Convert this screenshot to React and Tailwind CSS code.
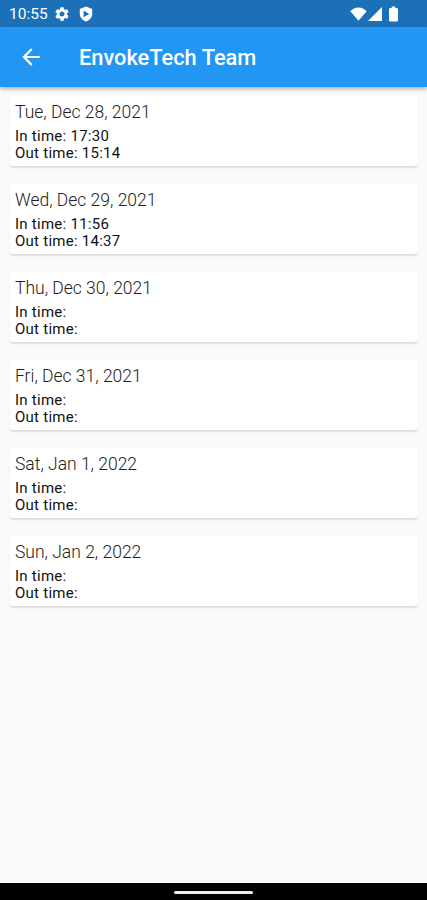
import React from 'react';

const days = [
  { date: 'Tue, Dec 28, 2021', inTime: '17:30', outTime: '15:14' },
  { date: 'Wed, Dec 29, 2021', inTime: '11:56', outTime: '14:37' },
  { date: 'Thu, Dec 30, 2021', inTime: '', outTime: '' },
  { date: 'Fri, Dec 31, 2021', inTime: '', outTime: '' },
  { date: 'Sat, Jan 1, 2022', inTime: '', outTime: '' },
  { date: 'Sun, Jan 2, 2022', inTime: '', outTime: '' },
];

function StatusBar() {
  return (
    <div className="flex h-[27px] shrink-0 items-center bg-[#1b70b7] pl-[9px] pr-[29px] text-white">
      <span className="w-[46px] whitespace-nowrap pt-[3px] text-[15.5px] leading-none">10:55</span>
      <svg viewBox="2 2 20 20" className="w-[14px] h-[14px] fill-current">
        <path d="M19.14 12.94c.04-.3.06-.61.06-.94 0-.32-.02-.64-.07-.94l2.03-1.58a.49.49 0 0 0 .12-.61l-1.92-3.32a.49.49 0 0 0-.59-.22l-2.39.96c-.5-.38-1.03-.7-1.62-.94l-.36-2.54a.48.48 0 0 0-.48-.41h-3.84a.47.47 0 0 0-.47.41l-.36 2.54c-.59.24-1.13.57-1.62.94l-2.39-.96a.48.48 0 0 0-.59.22L2.74 8.87a.47.47 0 0 0 .12.61l2.03 1.58c-.05.3-.09.63-.09.94s.02.64.07.94l-2.03 1.58a.49.49 0 0 0-.12.61l1.92 3.32c.12.22.37.29.59.22l2.39-.96c.5.38 1.03.7 1.62.94l.36 2.54c.05.24.24.41.48.41h3.84c.24 0 .44-.17.47-.41l.36-2.54c.59-.24 1.13-.56 1.62-.94l2.39.96c.22.08.47 0 .59-.22l1.92-3.32a.47.47 0 0 0-.12-.61l-2.01-1.58zM12 15.6A3.61 3.61 0 0 1 8.4 12c0-1.98 1.62-3.6 3.6-3.6s3.6 1.62 3.6 3.6-1.62 3.6-3.6 3.6z" />
      </svg>
      <svg viewBox="0 0 14 16" className="ml-[10px] w-[14px] h-[16px]">
        <path d="M7 .5 13.2 3v5c0 3.5-2.6 6-6.2 7.5C3.4 14 .8 11.5.8 8V3z" fill="currentColor" />
        <path d="M4.6 4.6 10.2 7.9 4.6 11.2z" className="fill-[#1b70b7]" />
      </svg>
      <div className="ml-auto flex items-center">
        <svg viewBox="0 0 17 14" className="w-[17px] h-[14px] fill-current">
          <path d="M8.5 13.8.3 4.3C2.5 1.8 5.3.5 8.5.5s6 1.3 8.2 3.8z" />
        </svg>
        <svg viewBox="0 0 14 14" className="ml-[1px] w-[14px] h-[14px] fill-current">
          <path d="M0 14 14 0v14z" />
        </svg>
        <svg viewBox="0 0 10 16" className="ml-[7px] w-[9px] h-[16px] fill-current" preserveAspectRatio="none">
          <path d="M3 .5h4V2h1.3C9.3 2 10 2.7 10 3.6v10.3c0 1-.7 1.6-1.7 1.6H1.7C.7 15.5 0 14.9 0 13.9V3.6C0 2.7.7 2 1.7 2H3z" />
        </svg>
      </div>
    </div>
  );
}

function AppBar() {
  return (
    <header className="relative z-10 flex h-[60px] shrink-0 items-center bg-[#2196f3] pl-[18px] text-white shadow-[0_2px_4px_rgba(0,0,0,0.3)]">
      <svg viewBox="0 0 24 24" className="w-[26px] h-[26px] fill-current">
        <path d="M20 11H7.83l5.59-5.59L12 4l-8 8 8 8 1.41-1.41L7.83 13H20z" />
      </svg>
      <h1 className="ml-[35px] pt-[2px] text-[21.8px] font-medium leading-none">EnvokeTech Team</h1>
    </header>
  );
}

function DayCard({ date, inTime, outTime }) {
  return (
    <li className="h-[70px] rounded-[3px] bg-white pl-[5px] pt-[5px] shadow-[0_1.5px_1.5px_rgba(0,0,0,0.11)]">
      <h2 className="text-[17.5px] font-light leading-[22px] text-[#222]">{date}</h2>
      <div className="mt-[5px] text-[15px] leading-[17px] tracking-[0.26px] text-[#111]">
        <p>In time: {inTime}</p>
        <p>Out time: {outTime}</p>
      </div>
    </li>
  );
}

export default function App() {
  return (
    <div className="flex h-screen flex-col overflow-hidden bg-[#fafafa] font-['Roboto',sans-serif]">
      <StatusBar />
      <AppBar />
      <ul className="flex flex-1 flex-col gap-[18px] pl-[10px] pr-[9px] pt-[9px]">
        {days.map((day) => (
          <DayCard key={day.date} {...day} />
        ))}
      </ul>
      <div className="flex h-[17px] shrink-0 items-center justify-center bg-black pt-px">
        <div className="h-[3px] w-[79px] rounded-full bg-[#eee]" />
      </div>
    </div>
  );
}
